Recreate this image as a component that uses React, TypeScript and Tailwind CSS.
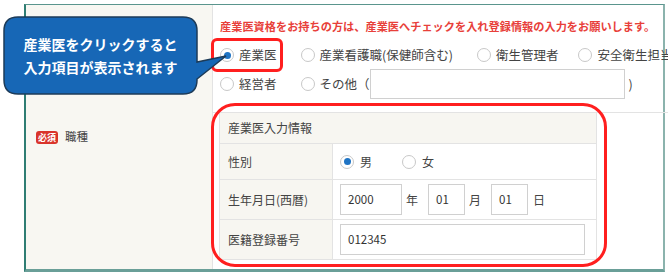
import React from 'react';

const font = { fontFamily: '"Noto Sans CJK JP", "Noto Sans", sans-serif' };

function Radio({ checked = false }: { checked?: boolean }) {
  return (
    <span className="w-[14px] h-[14px] rounded-full border border-[#c8c8c8] bg-white flex items-center justify-center shrink-0">
      {checked && <span className="w-[7px] h-[7px] rounded-full bg-[#1f74c4]"></span>}
    </span>
  );
}

function Option({ label, checked = false }: { label: string; checked?: boolean }) {
  return (
    <span className="flex items-center gap-[5px]">
      <Radio checked={checked} />
      <span className="text-[12.5px] text-[#444]">{label}</span>
    </span>
  );
}

function Row({ label, h, children }: { label: string; h: string; children: React.ReactNode }) {
  return (
    <div className={`flex border-b border-[#e3e3e3] ${h}`}>
      <div className="w-[113px] shrink-0 bg-[#f7f6f1] border-r border-[#e3e3e3] flex items-center pl-[8px] text-[12px] text-[#444]">
        {label}
      </div>
      <div className="flex-1 flex items-center pl-[7px] bg-white">{children}</div>
    </div>
  );
}

function Box({ w, value }: { w: string; value: string }) {
  return (
    <div className={`${w} h-[31px] border border-[#d0d0d0] bg-white flex items-center pl-[7px] text-[11.5px] text-[#333]`}>
      {value}
    </div>
  );
}

export default function App() {
  return (
    <div className="relative w-[668px] h-[277px] bg-white overflow-hidden" style={font}>
      <div className="ml-[24px] mt-[4px] w-[641px] h-[268px] flex border-l-2 border-l-[#2f7d73] border-t border-t-[#5a958d] border-r-2 border-r-[#8bb3ad] border-b-[3px] border-b-[#6a9f98]">
        <div className="w-[187px] shrink-0 bg-[#f8f7f2] border-r border-[#e3e3e3] flex items-center pl-[10px] gap-[7px]">
          <span className="bg-[#d9342b] text-white text-[9px] font-bold leading-none rounded-[3px] px-[2px] py-[2px]">必須</span>
          <span className="text-[11.5px] text-[#444]">職種</span>
        </div>

        <div className="flex-1 flex flex-col">
          <div className="h-[108px] border-b border-[#e3e3e3] pl-[7px] pt-[13px]">
            <div className="h-[16px] leading-[16px] text-[11.2px] font-bold text-[#e8403a] whitespace-nowrap">
              産業医資格をお持ちの方は、産業医へチェックを入れ登録情報の入力をお願いします。
            </div>
            <div className="mt-[7px] h-[28px] flex items-center gap-[24px] whitespace-nowrap">
              <span className="relative flex items-center">
                <Option label="産業医" checked />
                <span className="absolute -left-[9px] top-1/2 -translate-y-1/2 w-[72px] h-[34px] border-[3px] border-[#ff1f1f] rounded-[6px]"></span>
              </span>
              <Option label="産業看護職(保健師含む)" />
              <Option label="衛生管理者" />
              <span className="-ml-[4px]">
                <Option label="安全衛生担当者" />
              </span>
            </div>
            <div className="h-[30px] flex items-center whitespace-nowrap">
              <Option label="経営者" />
              <span className="ml-[24px] flex items-center">
                <Option label="その他（" />
                <span className="w-[255px] h-[30px] border border-[#d0d0d0] bg-white"></span>
                <span className="ml-[4px] text-[12.5px] text-[#444]">)</span>
              </span>
            </div>
          </div>

          <div className="pl-[6px]">
            <div className="relative w-[378px] border-l border-r border-[#e3e3e3]">
              <div className="h-[31px] bg-[#f7f6f1] border-b border-[#e3e3e3] flex items-center pl-[8px] text-[12px] text-[#444]">
                産業医入力情報
              </div>
              <Row label="性別" h="h-[36px]">
                <div className="flex items-center gap-[6px]">
                  <Radio checked />
                  <span className="text-[12px] text-[#444]">男</span>
                  <span className="ml-[24px]"><Radio /></span>
                  <span className="text-[12px] text-[#444]">女</span>
                </div>
              </Row>
              <Row label="生年月日(西暦)" h="h-[40px]">
                <Box w="w-[62px]" value="2000" />
                <span className="ml-[4px] mr-[10px] text-[12px] text-[#444]">年</span>
                <Box w="w-[37px]" value="01" />
                <span className="ml-[4px] mr-[10px] text-[12px] text-[#444]">月</span>
                <Box w="w-[37px]" value="01" />
                <span className="ml-[5px] text-[12px] text-[#444]">日</span>
              </Row>
              <Row label="医籍登録番号" h="h-[40px]">
                <Box w="w-[245px]" value="012345" />
              </Row>
              <span className="absolute -left-[9px] -top-[10px] -right-[11px] -bottom-[7px] border-[3px] border-[#ff1f1f] rounded-[24px] pointer-events-none"></span>
            </div>
          </div>
        </div>
      </div>

      <svg className="absolute left-0 top-0 pointer-events-none" width="668" height="277">
        <path
          d="M18,17 H183 Q197,17 197,31 V62 L226,56 L197,79 V80 Q197,94 183,94 H18 Q4,94 4,80 V31 Q4,17 18,17 Z"
          fill="#1767b6"
          stroke="#1d3b58"
          strokeWidth="1.5"
        />
      </svg>
      <div className="absolute left-[4px] top-[17px] w-[193px] h-[77px] flex flex-col items-center justify-center gap-[4px] text-white font-bold text-[14px] leading-[19px]">
        <span>産業医をクリックすると</span>
        <span>入力項目が表示されます</span>
      </div>
    </div>
  );
}
